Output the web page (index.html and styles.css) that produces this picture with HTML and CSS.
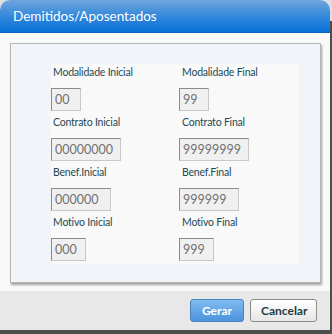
FILE: index.html
```html
<!DOCTYPE html>
<html lang="pt">
<head>
  <meta charset="UTF-8" />
  <title>Demitidos/Aposentados</title>
  <link rel="stylesheet" href="styles.css">
</head>
<body>
  <div class="dialog">
    <div class="dialog-header">Demitidos/Aposentados</div>

    <div class="dialog-body">
      <div class="panel">
        <div class="form-grid">
          <div class="field">
            <label class="field-label">Modalidade Inicial</label>
            <input class="field-input w30" type="text" value="00" readonly>
          </div>
          <div class="field">
            <label class="field-label">Modalidade Final</label>
            <input class="field-input w30" type="text" value="99" readonly>
          </div>
          <div class="field">
            <label class="field-label">Contrato Inicial</label>
            <input class="field-input w70" type="text" value="00000000" readonly>
          </div>
          <div class="field">
            <label class="field-label">Contrato Final</label>
            <input class="field-input w70" type="text" value="99999999" readonly>
          </div>
          <div class="field">
            <label class="field-label">Benef.Inicial</label>
            <input class="field-input w60" type="text" value="000000" readonly>
          </div>
          <div class="field">
            <label class="field-label">Benef.Final</label>
            <input class="field-input w60" type="text" value="999999" readonly>
          </div>
          <div class="field">
            <label class="field-label">Motivo Inicial</label>
            <input class="field-input w35" type="text" value="000" readonly>
          </div>
          <div class="field">
            <label class="field-label">Motivo Final</label>
            <input class="field-input w35" type="text" value="999" readonly>
          </div>
        </div>
      </div>
    </div>

    <div class="dialog-footer">
      <button class="btn btn-primary">Gerar</button>
      <button class="btn">Cancelar</button>
    </div>
  </div>
</body>
</html>
```

FILE: styles.css
```css
body {
  margin: 0;
  width: 332px;
  height: 334px;
  overflow: hidden;
  background: linear-gradient(#dedede 0, #dedede 21px, #4d4d4d 21px);
  font-family: Lato, "Noto Sans", sans-serif;
}
.dialog {
  width: 330px;
  height: 330px;
  border-radius: 10px 10px 0 0;
  overflow: hidden;
  display: flex;
  flex-direction: column;
  background: #f9f9f9;
}
.dialog-header {
  height: 32px;
  line-height: 33px;
  padding-left: 13px;
  border-bottom: 1px solid #0b60c0;
  background: linear-gradient(#6ea5dc, #2f86dc 55%, #0a71d9);
  color: #fff;
  font-size: 13.5px;
}
.dialog-body {
  padding: 10px 9px 8px 10px;
}
.panel {
  height: 240px;
  box-sizing: border-box;
  padding: 20px 0 0 40px;
  border: 1px solid #b6b6b6;
  background: #f1f5fa;
  box-shadow: 1px 2px 2px rgba(0, 0, 0, 0.35);
}
.form-grid {
  display: grid;
  grid-template-columns: 128px 120px;
  width: 248px;
  background: #f9f9f9;
}
.field {
  height: 50px;
  display: flex;
  flex-direction: column;
  align-items: flex-start;
}
.field-label {
  height: 16px;
  line-height: 16px;
  padding-left: 2px;
  margin-bottom: 8px;
  color: #1d4a56;
  font-size: 10.5px;
  letter-spacing: -0.2px;
}
.field:nth-child(even) .field-label {
  padding-left: 3px;
}
.field-input {
  box-sizing: border-box;
  height: 23px;
  margin: 0;
  padding: 0 0 0 3px;
  border: 1px solid;
  border-color: #8a8a8a #c8c8c8 #c8c8c8 #8a8a8a;
  background: #f0f0f0;
  color: #707070;
  font-family: Lato, "Noto Sans", sans-serif;
  font-size: 12.5px;
  outline: none;
}
.w30 { width: 30px; }
.w35 { width: 35px; }
.w60 { width: 60px; }
.w70 { width: 70px; }
.dialog-footer {
  flex: 1;
  display: flex;
  justify-content: flex-end;
  align-items: flex-start;
  gap: 6px;
  padding: 8px 13px 0 0;
  background: #e8e8e8;
}
.btn {
  height: 23px;
  padding: 0 10px;
  border: 1px solid #8c8c8c;
  border-radius: 3px;
  background: linear-gradient(#ffffff, #e6e6e6);
  color: #1f3b42;
  font-family: Lato, "Noto Sans", sans-serif;
  font-size: 12px;
  font-weight: bold;
}
.btn-primary {
  width: 54px;
  border-color: #4a84c0;
  background: linear-gradient(#80bcf0, #4a93dc);
  color: #fff;
}
.btn:not(.btn-primary) {
  width: 67px;
}
```
